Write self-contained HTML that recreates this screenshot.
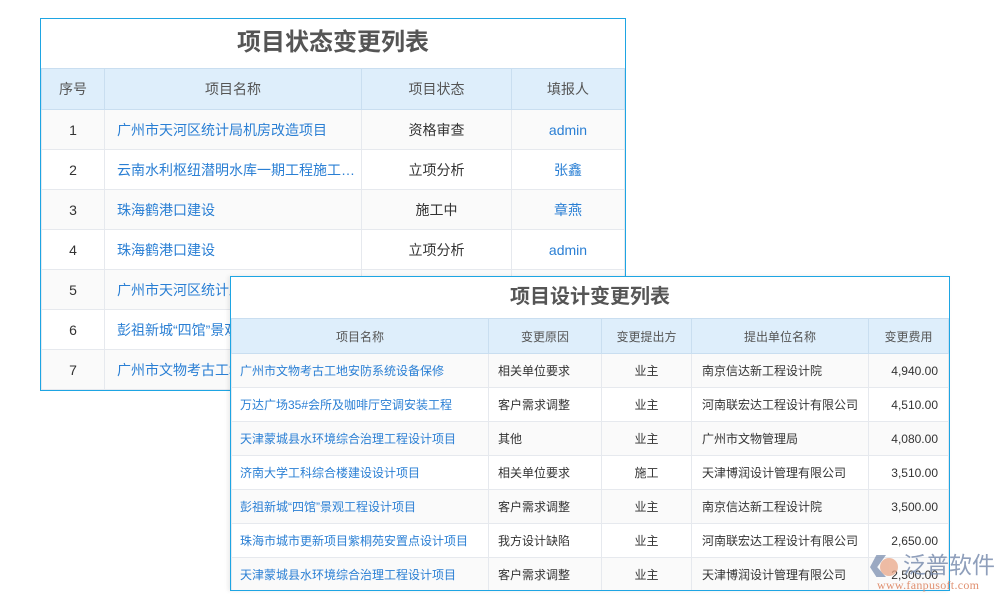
<!DOCTYPE html>
<html><head><meta charset="utf-8"><style>
*{margin:0;padding:0;box-sizing:border-box}
body{width:1000px;height:600px;background:#fff;position:relative;overflow:hidden;font-family:"Liberation Sans","Noto Sans CJK SC",sans-serif}
.box{position:absolute;border:1px solid #1ea5e3;background:#fff;overflow:hidden}
table{border-collapse:collapse;table-layout:fixed;width:100%}
td{border:1px solid #e6e9ee;overflow:hidden;white-space:nowrap;text-overflow:ellipsis;color:#333;text-align:center}
tr.h td{background:#deeefb;color:#555;border-color:#c9def0}
tr:nth-child(even) td{background:#fafafa}
.l{color:#2a7fd4}
.title{text-align:center;font-weight:bold;color:#555}
#t1 td{font-size:14px;height:40px}
#t1 tr.h td{height:41px}
#t2 td{font-size:12px;height:34px}
#t2 tr.h td{height:35px}
</style></head><body>
<div class="box" style="left:40px;top:18px;width:586px;height:373px">
<div class="title" style="height:49px;line-height:47px;font-size:24px">项目状态变更列表</div>
<table id="t1"><colgroup><col style="width:63px"><col style="width:257px"><col style="width:150px"><col></colgroup>
<tr class="h"><td>序号</td><td>项目名称</td><td>项目状态</td><td>填报人</td></tr>
<tr><td>1</td><td class="l" style="text-align:left;padding-left:12px">广州市天河区统计局机房改造项目</td><td>资格审查</td><td class="l">admin</td></tr>
<tr><td>2</td><td class="l" style="text-align:left;padding-left:12px">云南水利枢纽潜明水库一期工程施工项目</td><td>立项分析</td><td class="l">张鑫</td></tr>
<tr><td>3</td><td class="l" style="text-align:left;padding-left:12px">珠海鹤港口建设</td><td>施工中</td><td class="l">章燕</td></tr>
<tr><td>4</td><td class="l" style="text-align:left;padding-left:12px">珠海鹤港口建设</td><td>立项分析</td><td class="l">admin</td></tr>
<tr><td>5</td><td class="l" style="text-align:left;padding-left:12px">广州市天河区统计局机房</td><td></td><td></td></tr>
<tr><td>6</td><td class="l" style="text-align:left;padding-left:12px">彭祖新城“四馆”景观</td><td></td><td></td></tr>
<tr><td>7</td><td class="l" style="text-align:left;padding-left:12px">广州市文物考古工地</td><td></td><td></td></tr>
</table></div>
<div class="box" style="left:230px;top:276px;width:720px;height:315px;box-shadow:-2px 0 4px rgba(0,0,0,.08)">
<div class="title" style="height:41px;line-height:41px;font-size:20px">项目设计变更列表</div>
<table id="t2"><colgroup><col style="width:257px"><col style="width:113px"><col style="width:90px"><col style="width:177px"><col></colgroup>
<tr class="h"><td>项目名称</td><td>变更原因</td><td>变更提出方</td><td>提出单位名称</td><td>变更费用</td></tr>
<tr><td class="l" style="text-align:left;padding-left:8px">广州市文物考古工地安防系统设备保修</td><td style="text-align:left;padding-left:9px">相关单位要求</td><td>业主</td><td style="text-align:left;padding-left:10px">南京信达新工程设计院</td><td style="text-align:right;padding-right:10px">4,940.00</td></tr>
<tr><td class="l" style="text-align:left;padding-left:8px">万达广场35#会所及咖啡厅空调安装工程</td><td style="text-align:left;padding-left:9px">客户需求调整</td><td>业主</td><td style="text-align:left;padding-left:10px">河南联宏达工程设计有限公司</td><td style="text-align:right;padding-right:10px">4,510.00</td></tr>
<tr><td class="l" style="text-align:left;padding-left:8px">天津蒙城县水环境综合治理工程设计项目</td><td style="text-align:left;padding-left:9px">其他</td><td>业主</td><td style="text-align:left;padding-left:10px">广州市文物管理局</td><td style="text-align:right;padding-right:10px">4,080.00</td></tr>
<tr><td class="l" style="text-align:left;padding-left:8px">济南大学工科综合楼建设设计项目</td><td style="text-align:left;padding-left:9px">相关单位要求</td><td>施工</td><td style="text-align:left;padding-left:10px">天津博润设计管理有限公司</td><td style="text-align:right;padding-right:10px">3,510.00</td></tr>
<tr><td class="l" style="text-align:left;padding-left:8px">彭祖新城“四馆”景观工程设计项目</td><td style="text-align:left;padding-left:9px">客户需求调整</td><td>业主</td><td style="text-align:left;padding-left:10px">南京信达新工程设计院</td><td style="text-align:right;padding-right:10px">3,500.00</td></tr>
<tr><td class="l" style="text-align:left;padding-left:8px">珠海市城市更新项目紫桐苑安置点设计项目</td><td style="text-align:left;padding-left:9px">我方设计缺陷</td><td>业主</td><td style="text-align:left;padding-left:10px">河南联宏达工程设计有限公司</td><td style="text-align:right;padding-right:10px">2,650.00</td></tr>
<tr><td class="l" style="text-align:left;padding-left:8px">天津蒙城县水环境综合治理工程设计项目</td><td style="text-align:left;padding-left:9px">客户需求调整</td><td>业主</td><td style="text-align:left;padding-left:10px">天津博润设计管理有限公司</td><td style="text-align:right;padding-right:10px">2,500.00</td></tr>
</table></div>
<div style="position:absolute;left:870px;top:553px;width:30px;height:26px;opacity:.75">
<div style="position:absolute;left:0;top:2px;width:16px;height:22px;background:#7c8fb0;clip-path:polygon(40% 0,100% 0,45% 55%,100% 100%,40% 100%,0 55%)"></div>
<div style="position:absolute;left:10px;top:5px;width:18px;height:18px;border-radius:50%;background:#e9a788"></div>
</div>
<div style="position:absolute;left:903px;top:550px;font-size:23px;color:#7c8fb0;opacity:.85;font-family:'Noto Sans CJK SC',sans-serif;line-height:26px">泛普软件</div>
<div style="position:absolute;left:877px;top:578px;font-size:12px;color:#e09070;font-family:'Liberation Serif',serif;letter-spacing:.3px">www.fanpusoft.com</div>
</body></html>
